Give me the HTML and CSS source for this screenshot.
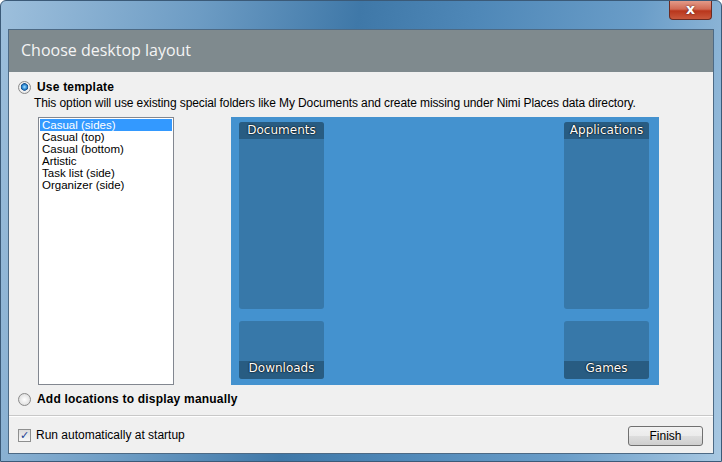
FILE: index.html
```html
<!DOCTYPE html>
<html>
<head>
<meta charset="utf-8">
<link rel="stylesheet" href="styles.css">
</head>
<body>
<div class="window">
  <div class="titlebar">
    <div class="close">x</div>
  </div>
  <div class="client">
    <div class="header">Choose desktop layout</div>
    <div class="content">
      <div class="option">
        <span class="radio checked"></span>
        <span class="opt-label">Use template</span>
      </div>
      <div class="desc">This option will use existing special folders like My Documents and create missing under Nimi Places data directory.</div>
      <div class="main">
        <div class="listbox">
          <div class="item selected">Casual (sides)</div>
          <div class="item">Casual (top)</div>
          <div class="item">Casual (bottom)</div>
          <div class="item">Artistic</div>
          <div class="item">Task list (side)</div>
          <div class="item">Organizer (side)</div>
        </div>
        <div class="preview">
          <div class="col">
            <div class="panel tall"><div class="cap">Documents</div></div>
            <div class="panel short"><div class="cap">Downloads</div></div>
          </div>
          <div class="col">
            <div class="panel tall"><div class="cap">Applications</div></div>
            <div class="panel short"><div class="cap">Games</div></div>
          </div>
        </div>
      </div>
      <div class="option second">
        <span class="radio"></span>
        <span class="opt-label">Add locations to display manually</span>
      </div>
    </div>
    <div class="footer">
      <label class="check"><span class="box">&#10003;</span>Run automatically at startup</label>
      <div class="button">Finish</div>
    </div>
  </div>
</div>
</body>
</html>
```
FILE: styles.css
```css
* { box-sizing: border-box; }
html, body { margin: 0; padding: 0; }
body {
  width: 722px;
  height: 462px;
  font-family: "Liberation Sans", Arial, sans-serif;
  font-size: 12px;
  color: #000;
  background: #fff;
}
.window {
  width: 722px;
  height: 462px;
  border: 1px solid #3b5a78;
  border-radius: 6px 6px 0 0;
  background: linear-gradient(100deg, #9dbfdc 0%, #6d9cc4 25%, #3f78a8 45%, #4f88b8 60%, #6a9dc8 80%, #a8c8e2 100%);
  display: flex;
  flex-direction: column;
  padding: 0 7px 7px 7px;
}
.titlebar {
  height: 28px;
  flex: none;
  display: flex;
  justify-content: flex-end;
  align-items: flex-start;
}
.close {
  width: 43px;
  height: 19px;
  border: 1px solid #6b2b22;
  border-top: none;
  border-radius: 0 0 4px 4px;
  background: linear-gradient(#e39a88 0%, #d16a54 45%, #b9361c 55%, #c9583c 100%);
  color: #fff;
  font-family: "DejaVu Sans", sans-serif;
  font-weight: bold;
  font-size: 14px;
  line-height: 16px;
  text-align: center;
  text-shadow: 0 0 2px #402020;
  margin-right: 2px;
}
.client {
  flex: 1;
  border: 1px solid #4d6a85;
  background: #f0f0f0;
  display: flex;
  flex-direction: column;
}
.header {
  height: 42px;
  flex: none;
  background: #7f8a8e;
  color: #f4f4f4;
  font-family: "Open Sans", sans-serif;
  font-size: 16px;
  padding-left: 12px;
  line-height: 40px;
}
.content {
  flex: 1;
  padding: 8px 0 0 9px;
  border-bottom: 1px solid #c8c8c8;
}
.option {
  display: flex;
  align-items: center;
  height: 14px;
}
.radio {
  width: 13px;
  height: 13px;
  border-radius: 50%;
  border: 1px solid #8a8a8a;
  background: radial-gradient(circle, #fff 0%, #e6e6e6 60%, #cfcfcf 100%);
  margin-right: 6px;
  display: inline-block;
  flex: none;
}
.radio.checked {
  background: radial-gradient(circle at 50% 45%, #a9e2ff 0%, #2a8ad6 28%, #1a4f8a 42%, #f4f4f4 50%, #d8d8d8 100%);
}
.opt-label {
  font-weight: bold;
  font-family: "Liberation Sans", Arial, sans-serif;
  font-size: 12px;
  letter-spacing: 0.2px;
}
.desc {
  margin-left: 16px;
  margin-top: 2px;
  height: 15px;
  line-height: 15px;
  letter-spacing: -0.1px;
}
.main {
  display: flex;
  margin-top: 6px;
  margin-left: 20px;
  height: 268px;
}
.listbox {
  width: 136px;
  height: 268px;
  border: 1px solid #828790;
  background: #fff;
  padding: 1px;
  flex: none;
}
.item {
  height: 12px;
  line-height: 12px;
  padding-left: 2px;
  font-size: 11.5px;
  overflow: hidden;
}
.item.selected {
  background: #3399ff;
  color: #fff;
}
.preview {
  margin-left: 57px;
  width: 428px;
  height: 268px;
  background: #4492cf;
  display: flex;
  justify-content: space-between;
  padding: 5px 10px 6px 8px;
}
.col {
  width: 85px;
  display: flex;
  flex-direction: column;
  justify-content: space-between;
}
.panel {
  background: #3778a9;
  border-radius: 3px;
  display: flex;
  flex-direction: column;
  overflow: hidden;
}
.panel.tall { height: 187px; }
.panel.short { height: 58px; justify-content: flex-end; }
.short .cap { height: 18px; line-height: 15px; }
.cap {
  height: 17px;
  background: #285c82;
  color: #fff;
  font-family: "DejaVu Sans", sans-serif;
  font-size: 12px;
  line-height: 17px;
  text-align: center;
  text-shadow: 0 0 2px #000, 0 0 1px #000;
}
.second {
  margin-top: 7px;
}
.footer {
  height: 37px;
  flex: none;
  display: flex;
  align-items: center;
  justify-content: space-between;
  padding: 0 10px 0 9px;
  border-top: 1px solid #fff;
}
.check {
  display: flex;
  align-items: center;
}
.box {
  width: 13px;
  height: 13px;
  border: 1px solid #8e8f8f;
  background: linear-gradient(#dcdcdc, #f8f8f8);
  margin-right: 5px;
  font-size: 11px;
  line-height: 11px;
  color: #1c3f94;
  text-align: center;
  font-family: "DejaVu Sans", sans-serif;
}
.button {
  width: 75px;
  height: 20px;
  border: 1px solid #707070;
  border-radius: 3px;
  background: linear-gradient(#f2f2f2 0%, #ebebeb 50%, #dddddd 51%, #cfcfcf 100%);
  text-align: center;
  line-height: 18px;
  margin-top: 1px;
}
```
